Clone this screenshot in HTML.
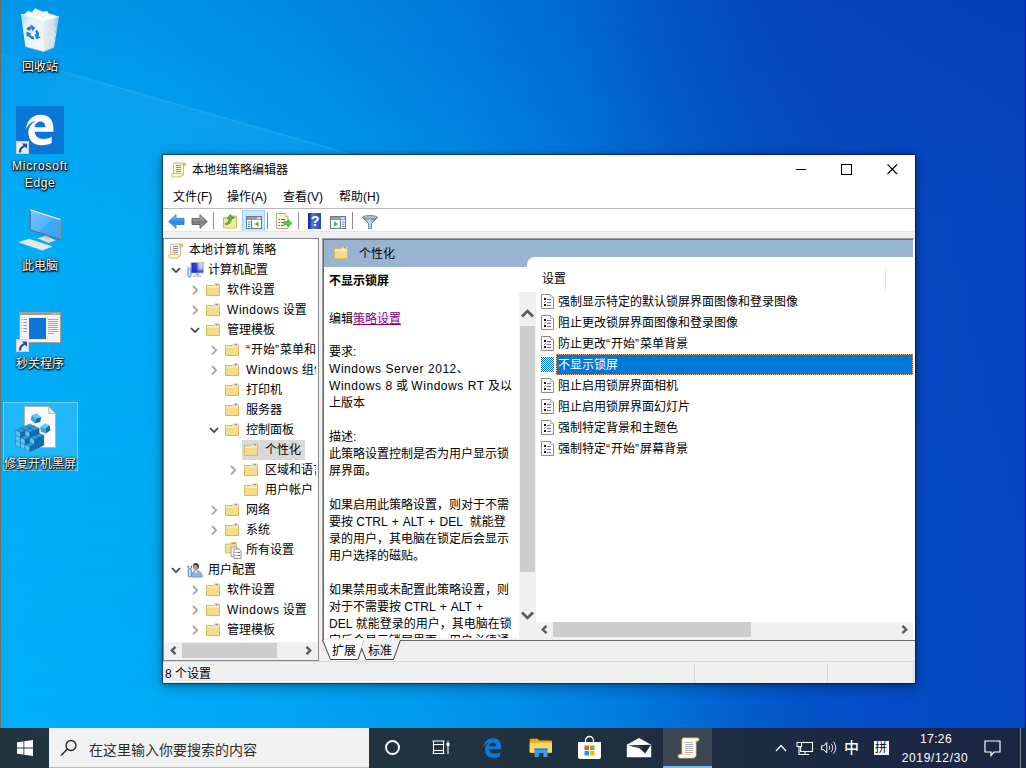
<!DOCTYPE html>
<html lang="zh-CN">
<head>
<meta charset="utf-8">
<title>本地组策略编辑器</title>
<style>
html,body{margin:0;padding:0;}
body{width:1026px;height:768px;overflow:hidden;position:relative;background:#0a6fd0;
 font-family:"Liberation Sans","Noto Sans CJK SC",sans-serif;font-size:12px;color:#000;}
.a{position:absolute;}
.t{position:absolute;white-space:nowrap;line-height:16px;height:16px;margin-top:1px;}
#desk{left:0;top:0;width:1026px;height:728px;overflow:hidden;
 background:linear-gradient(85deg,#00aef8 0%,#00a8f5 18%,#009aee 34%,#008ae6 47%,#0076dc 58%,#045ece 67%,#0551c8 74%,#054ac4 82%,#0446c1 100%);}
#desk .glow{left:0;top:0;width:1026px;height:728px;
 background:linear-gradient(180deg,rgba(0,30,150,.15) 0%,rgba(0,30,150,.09) 12%,rgba(0,40,150,0) 30%,rgba(0,120,255,.03) 100%);}
#desk .glow2{left:0;top:0;width:800px;height:728px;
 background:linear-gradient(90deg,rgba(0,205,255,.12) 0%,rgba(0,205,255,.12) 55%,rgba(0,205,255,0) 100%);
 -webkit-mask-image:linear-gradient(180deg,rgba(0,0,0,0) 0%,rgba(0,0,0,.35) 40%,#000 100%);}
.beam{position:absolute;left:0;top:52px;width:560px;height:160px;background:linear-gradient(180deg,rgba(130,220,255,.0) 0,rgba(130,220,255,.20) 1.5px,rgba(90,205,255,.12) 3px,rgba(60,200,255,.05) 60px,rgba(60,200,255,0) 160px);transform-origin:0 0;transform:rotate(16deg);-webkit-mask-image:linear-gradient(90deg,rgba(0,0,0,.4) 0,#000 20%,#000 60%,rgba(0,0,0,.3) 100%);}
.dl{position:absolute;color:#fff;text-align:center;width:90px;line-height:17px;font-size:12px;
 text-shadow:0 1px 2px rgba(0,0,0,.95),0 0 3px rgba(0,0,0,.85),1px 1px 1px rgba(0,0,0,.8),0 0 1px rgba(0,0,0,.6);}
/* window */
#win{left:162px;top:154px;width:754px;height:530px;background:#fff;background-clip:padding-box;overflow:hidden;box-sizing:border-box;border:1px solid rgba(0,10,40,.5);
 box-shadow:0 3px 12px rgba(0,0,0,.32),0 0 4px rgba(0,0,0,.2);}
#win .t,#win .a{}
.l{letter-spacing:.55px;}
.u{word-spacing:1.2px;}
.q{letter-spacing:1px;}
.sep{position:absolute;width:1px;background:#8d8d8d;top:58px;height:18px;}
.row{position:absolute;left:0;height:20px;width:155px;}
.chev{position:absolute;top:0;width:16px;height:20px;}
.li{position:absolute;left:233px;width:380px;height:21px;}
.li .t{left:0;top:2px;}
/* taskbar */
#tb{left:0;top:728px;width:1026px;height:40px;background:linear-gradient(90deg,#21343e 0%,#21333e 48%,#1e2d41 68%,#1b2843 82%,#1b2643 100%);}
#search{left:49px;top:0;width:320px;height:39px;background:#f2f2f2;border-bottom:1px solid #bdbdbd;}
</style>
</head>
<body>
<div id="desk" class="a">
 <div class="a glow2"></div>
 <div class="a glow"></div>
 <div class="beam"></div>
 <svg class="a" style="left:12px;top:2px" width="56" height="56" viewBox="0 0 56 56"><defs><linearGradient id="rbl" x1="0" y1="0" x2="1" y2="1"><stop offset="0" stop-color="#cfe6f6" stop-opacity=".75"/><stop offset=".25" stop-color="#f1f5f9" stop-opacity=".95"/><stop offset="1" stop-color="#f6f8fa"/></linearGradient><linearGradient id="rbr" x1="0" y1="0" x2="1" y2="0"><stop offset="0" stop-color="#e9edf1"/><stop offset=".6" stop-color="#dde4ea" stop-opacity=".95"/><stop offset="1" stop-color="#b9d9f0" stop-opacity=".7"/></linearGradient></defs><path d="M9 12.5L27 8l20 6.5-15.8 5z" fill="#d5e9f7" opacity=".8"/><path d="M12 13l4-4 4 1.5 3-4 4.5 2 2.5 2 5-1.5 2 3.5 5.5.5 1.5 2.5-13.8 4.5-10-4z" fill="#fbfcfd" stroke="#d3dbe2" stroke-width=".5"/><path d="M20 10.5l3 4 4-3.5 3 4.5 4-3" fill="none" stroke="#cfd6dd" stroke-width=".7"/><path d="M9 12.5l22.2 7 .3 30.1-18.2-5.1z" fill="url(#rbl)"/><path d="M31.2 19.5l15.8-5-4.8 30.8-10.7 4.3z" fill="url(#rbr)"/><path d="M9 12.5l22.2 7 15.8-5" fill="none" stroke="#e8f1f8" stroke-width="1"/><path d="M31.2 19.5l.3 30.1" stroke="#f7f9fb" stroke-width=".8"/><path d="M13.3 44.5l18.2 5.1 10.7-4.3" fill="none" stroke="#d9cfc8" stroke-width=".7"/><path d="M40 24l3 2.5-3 3 3 3-3.5 3 3 3-3.5 3" fill="none" stroke="#f6f8fa" stroke-width="1.2" opacity=".5"/><g transform="translate(20.7,30.9) skewY(17) scale(.95)"><g transform="rotate(0)"><path d="M-5.02 -1.35A5.2 5.2 0 0 1 -1.35 -5.02" fill="none" stroke="#1e78de" stroke-width="3"/><path d="M-2.3 -8.4L-.4 -1.6 2.9 -6.1z" fill="#1e78de"/></g><g transform="rotate(120)"><path d="M-5.02 -1.35A5.2 5.2 0 0 1 -1.35 -5.02" fill="none" stroke="#1e78de" stroke-width="3"/><path d="M-2.3 -8.4L-.4 -1.6 2.9 -6.1z" fill="#1e78de"/></g><g transform="rotate(240)"><path d="M-5.02 -1.35A5.2 5.2 0 0 1 -1.35 -5.02" fill="none" stroke="#1e78de" stroke-width="3"/><path d="M-2.3 -8.4L-.4 -1.6 2.9 -6.1z" fill="#1e78de"/></g></g></svg>
<div class="dl" style="left:-5px;top:59px">回收站</div>
<div class="a" style="left:16px;top:106px;width:48px;height:48px;background:#0a77d8"></div>
<svg class="a" style="left:23px;top:113px" width="34" height="34" viewBox="0 0 36 38"><path d="M2 19C3 9 9 2 19 2c9 0 14 6 14 15v4H12c.5 5 4 8 10 8 4 0 7-1 9-2.5v7c-3 1.5-6 2.5-11 2.5-9 0-15-5-15-14 0-6 3-10 8-13C7 10.5 4 14 2 19zm10-3h12c0-4-2-6.5-5.5-6.5S12.5 12 12 16z" fill="#fff"/></svg>
<div class="a" style="left:16px;top:141px;width:13px;height:13px;background:#ececec;box-shadow:inset 0 0 0 1px #d6cfc6"></div><svg class="a" style="left:17px;top:142px" width="11" height="11" viewBox="0 0 11 11"><path d="M4.8 1.5H10V6.7z" fill="#1d4fa5"/><path d="M7.8 3.8C4.5 5.2 2.8 7.5 3 10.5" fill="none" stroke="#1d4fa5" stroke-width="2.3"/></svg>
<div class="dl" style="left:-5px;top:158px;letter-spacing:.8px">Microsoft</div>
<div class="dl" style="left:-5px;top:175px;letter-spacing:.6px">Edge</div>
<svg class="a" style="left:14px;top:206px" width="52" height="48" viewBox="0 0 52 48"><defs><linearGradient id="pc" x1="0" y1="0" x2="1" y2="1"><stop offset="0" stop-color="#72c4ff"/><stop offset=".5" stop-color="#55b4fb"/><stop offset=".52" stop-color="#3ea9f9"/><stop offset="1" stop-color="#38a4f6"/></linearGradient></defs><path d="M23.2 32.3l8.3-2.3 10.2 4.3-7 2.6z" fill="#d9dee2"/><path d="M31 27l4 1.3v5l-4-1z" fill="#b9c0c6"/><path d="M16.2 3.8l30.3 9.9v20l-30.3-9.8z" fill="url(#pc)" stroke="#5b5f66" stroke-width="1"/><path d="M16.2 3.8l30.3 9.9" stroke="#eceff2" stroke-width="1.3"/><path d="M46.5 13.7v20" stroke="#8b9096" stroke-width="1.2"/><path d="M4.9 36.3l10.2-3.3 23 7.6-9.8 3.7z" fill="#f0f2f4" stroke="#d3d8dc" stroke-width=".5"/><path d="M8 35.5l23 7.5M11 34.5l23 7.5M13.5 33.6l23 7.6M9 37.6l9-3M14 39.3l9-3M19 40.9l9-3M24 42.5l9-3" stroke="#d5dadf" stroke-width=".5"/></svg>
<div class="dl" style="left:-5px;top:258px">此电脑</div>
<svg class="a" style="left:19px;top:312px" width="42" height="31" viewBox="0 0 42 31"><rect x=".5" y=".5" width="41" height="30" fill="#f3f3f3" stroke="#a3a09c"/><rect x=".5" y=".5" width="41" height="2.5" fill="#9b9b9b"/><path d="M33 1.7h1.5M35.5 1.7h1.5M38 1.7h1.5" stroke="#dcdcdc" stroke-width="1"/><rect x="10" y="6" width="17" height="21" fill="#0e74d8"/><path d="M2.5 7.5h1M4.5 7.5h3.5M2.5 10.5h1M4.5 10.5h3.5M2.5 13.5h1M4.5 13.5h3.5M2.5 16.5h1M4.5 16.5h3.5M2.5 19.5h1M4.5 19.5h3.5" stroke="#9a9a9a" stroke-width="1"/><path d="M29 7.5h10M29 9.5h10M29 11.5h10M29 13.5h10M29 15.5h10M29 17.5h10M29 19.5h10M29 21.5h6" stroke="#a8a8a8" stroke-width="1"/></svg>
<div class="a" style="left:16px;top:339px;width:13px;height:13px;background:#ececec;box-shadow:inset 0 0 0 1px #d6cfc6"></div><svg class="a" style="left:17px;top:340px" width="11" height="11" viewBox="0 0 11 11"><path d="M4.8 1.5H10V6.7z" fill="#1d4fa5"/><path d="M7.8 3.8C4.5 5.2 2.8 7.5 3 10.5" fill="none" stroke="#1d4fa5" stroke-width="2.3"/></svg>
<div class="dl" style="left:-5px;top:356px">秒关程序</div>
<div class="a" style="left:3px;top:402px;width:73px;height:67px;background:rgba(110,210,255,.30);border:1px solid rgba(170,225,255,.6)"></div>
<svg class="a" style="left:14px;top:404px" width="46" height="50" viewBox="0 0 46 50"><path d="M10.5 2.5h24l7 7v34h-31z" fill="#fafafa" stroke="#b5a8a0" stroke-width=".8"/><path d="M34.5 2.5v7h7z" fill="#e6e6e6" stroke="#b5a8a0" stroke-width=".7"/><g stroke="#1a5f92" stroke-width=".35" stroke-linejoin="round"><polygon points="15.8,30 20.5,32.1 15.8,34.2 11.1,32.1" fill="#2b9cde"/><polygon points="11.1,32.1 15.8,34.2 15.8,39.2 11.1,37.1" fill="#58c8f9"/><polygon points="20.5,32.1 15.8,34.2 15.8,39.2 20.5,37.1" fill="#0f6dac"/><polygon points="11.1,32.1 15.8,34.2 11.1,36.3 6.4,34.2" fill="#2b9cde"/><polygon points="6.4,34.2 11.1,36.3 11.1,41.3 6.4,39.2" fill="#58c8f9"/><polygon points="15.8,34.2 11.1,36.3 11.1,41.3 15.8,39.2" fill="#0f6dac"/><polygon points="20.5,32.1 25.2,34.2 20.5,36.3 15.8,34.2" fill="#2b9cde"/><polygon points="15.8,34.2 20.5,36.3 20.5,41.3 15.8,39.2" fill="#58c8f9"/><polygon points="25.2,34.2 20.5,36.3 20.5,41.3 25.2,39.2" fill="#0f6dac"/><polygon points="15.8,25 20.5,27.1 15.8,29.2 11.1,27.1" fill="#2b9cde"/><polygon points="11.1,27.1 15.8,29.2 15.8,34.2 11.1,32.1" fill="#58c8f9"/><polygon points="20.5,27.1 15.8,29.2 15.8,34.2 20.5,32.1" fill="#0f6dac"/><polygon points="6.4,34.2 11.1,36.3 6.4,38.4 1.7,36.3" fill="#2b9cde"/><polygon points="1.7,36.3 6.4,38.4 6.4,43.4 1.7,41.3" fill="#58c8f9"/><polygon points="11.1,36.3 6.4,38.4 6.4,43.4 11.1,41.3" fill="#0f6dac"/><polygon points="15.8,34.2 20.5,36.3 15.8,38.4 11.1,36.3" fill="#2b9cde"/><polygon points="11.1,36.3 15.8,38.4 15.8,43.4 11.1,41.3" fill="#58c8f9"/><polygon points="20.5,36.3 15.8,38.4 15.8,43.4 20.5,41.3" fill="#0f6dac"/><polygon points="25.2,34.2 29.9,36.3 25.2,38.4 20.5,36.3" fill="#2b9cde"/><polygon points="20.5,36.3 25.2,38.4 25.2,43.4 20.5,41.3" fill="#58c8f9"/><polygon points="29.9,36.3 25.2,38.4 25.2,43.4 29.9,41.3" fill="#0f6dac"/><polygon points="11.1,27.1 15.8,29.2 11.1,31.3 6.4,29.2" fill="#2b9cde"/><polygon points="6.4,29.2 11.1,31.3 11.1,36.3 6.4,34.2" fill="#58c8f9"/><polygon points="15.8,29.2 11.1,31.3 11.1,36.3 15.8,34.2" fill="#0f6dac"/><polygon points="20.5,27.1 25.2,29.2 20.5,31.3 15.8,29.2" fill="#2b9cde"/><polygon points="15.8,29.2 20.5,31.3 20.5,36.3 15.8,34.2" fill="#58c8f9"/><polygon points="25.2,29.2 20.5,31.3 20.5,36.3 25.2,34.2" fill="#0f6dac"/><polygon points="15.8,20 20.5,22.1 15.8,24.2 11.1,22.1" fill="#2b9cde"/><polygon points="11.1,22.1 15.8,24.2 15.8,29.2 11.1,27.1" fill="#58c8f9"/><polygon points="20.5,22.1 15.8,24.2 15.8,29.2 20.5,27.1" fill="#0f6dac"/><polygon points="11.1,36.3 15.8,38.4 11.1,40.5 6.4,38.4" fill="#2b9cde"/><polygon points="6.4,38.4 11.1,40.5 11.1,45.5 6.4,43.4" fill="#58c8f9"/><polygon points="15.8,38.4 11.1,40.5 11.1,45.5 15.8,43.4" fill="#0f6dac"/><polygon points="20.5,36.3 25.2,38.4 20.5,40.5 15.8,38.4" fill="#2b9cde"/><polygon points="15.8,38.4 20.5,40.5 20.5,45.5 15.8,43.4" fill="#58c8f9"/><polygon points="25.2,38.4 20.5,40.5 20.5,45.5 25.2,43.4" fill="#0f6dac"/><polygon points="6.4,29.2 11.1,31.3 6.4,33.4 1.7,31.3" fill="#2b9cde"/><polygon points="1.7,31.3 6.4,33.4 6.4,38.4 1.7,36.3" fill="#58c8f9"/><polygon points="11.1,31.3 6.4,33.4 6.4,38.4 11.1,36.3" fill="#0f6dac"/><polygon points="15.8,29.2 20.5,31.3 15.8,33.4 11.1,31.3" fill="#2b9cde"/><polygon points="11.1,31.3 15.8,33.4 15.8,38.4 11.1,36.3" fill="#58c8f9"/><polygon points="20.5,31.3 15.8,33.4 15.8,38.4 20.5,36.3" fill="#0f6dac"/><polygon points="25.2,29.2 29.9,31.3 25.2,33.4 20.5,31.3" fill="#2b9cde"/><polygon points="20.5,31.3 25.2,33.4 25.2,38.4 20.5,36.3" fill="#58c8f9"/><polygon points="29.9,31.3 25.2,33.4 25.2,38.4 29.9,36.3" fill="#0f6dac"/><polygon points="11.1,22.1 15.8,24.2 11.1,26.3 6.4,24.2" fill="#2b9cde"/><polygon points="6.4,24.2 11.1,26.3 11.1,31.3 6.4,29.2" fill="#58c8f9"/><polygon points="15.8,24.2 11.1,26.3 11.1,31.3 15.8,29.2" fill="#0f6dac"/><polygon points="20.5,22.1 25.2,24.2 20.5,26.3 15.8,24.2" fill="#2b9cde"/><polygon points="15.8,24.2 20.5,26.3 20.5,31.3 15.8,29.2" fill="#58c8f9"/><polygon points="25.2,24.2 20.5,26.3 20.5,31.3 25.2,29.2" fill="#0f6dac"/><polygon points="15.8,38.4 20.5,40.5 15.8,42.6 11.1,40.5" fill="#2b9cde"/><polygon points="11.1,40.5 15.8,42.6 15.8,47.6 11.1,45.5" fill="#58c8f9"/><polygon points="20.5,40.5 15.8,42.6 15.8,47.6 20.5,45.5" fill="#0f6dac"/><polygon points="11.1,31.3 15.8,33.4 11.1,35.5 6.4,33.4" fill="#2b9cde"/><polygon points="6.4,33.4 11.1,35.5 11.1,40.5 6.4,38.4" fill="#58c8f9"/><polygon points="15.8,33.4 11.1,35.5 11.1,40.5 15.8,38.4" fill="#0f6dac"/><polygon points="20.5,31.3 25.2,33.4 20.5,35.5 15.8,33.4" fill="#2b9cde"/><polygon points="15.8,33.4 20.5,35.5 20.5,40.5 15.8,38.4" fill="#58c8f9"/><polygon points="25.2,33.4 20.5,35.5 20.5,40.5 25.2,38.4" fill="#0f6dac"/><polygon points="6.4,24.2 11.1,26.3 6.4,28.4 1.7,26.3" fill="#2b9cde"/><polygon points="1.7,26.3 6.4,28.4 6.4,33.4 1.7,31.3" fill="#58c8f9"/><polygon points="11.1,26.3 6.4,28.4 6.4,33.4 11.1,31.3" fill="#0f6dac"/><polygon points="15.8,24.2 20.5,26.3 15.8,28.4 11.1,26.3" fill="#2b9cde"/><polygon points="11.1,26.3 15.8,28.4 15.8,33.4 11.1,31.3" fill="#58c8f9"/><polygon points="20.5,26.3 15.8,28.4 15.8,33.4 20.5,31.3" fill="#0f6dac"/></g><g transform="translate(22,14.5) rotate(12)"><polygon points="0,-5 4.8,-2.5 0,0 -4.8,-2.5" fill="#5ccbfb"/><polygon points="-4.8,-2.5 0,0 0,5 -4.8,2.5" fill="#36a8e8"/><polygon points="4.8,-2.5 0,0 0,5 4.8,2.5" fill="#0f6dac"/></g><g transform="translate(31.3,24.5) rotate(-8)"><polygon points="0,-5 4.8,-2.5 0,0 -4.8,-2.5" fill="#5ccbfb"/><polygon points="-4.8,-2.5 0,0 0,5 -4.8,2.5" fill="#36a8e8"/><polygon points="4.8,-2.5 0,0 0,5 4.8,2.5" fill="#0f6dac"/></g></svg>
<div class="dl" style="left:-5px;top:456px">修复开机黑屏</div>
</div>
<div class="a" style="left:0;top:0;width:1px;height:768px;background:#6a6e70"></div>
<div class="a" style="left:1025px;top:0;width:1px;height:768px;background:#1b2640"></div>

<div id="win" class="a">
 <svg class="a" style="left:8px;top:7px" width="16" height="16" viewBox="0 0 16 16"><rect x="2.5" y="1" width="10" height="12.5" rx="1" fill="#fdf6d4" stroke="#b5b1a2" stroke-width=".9"/><circle cx="13.3" cy="2.3" r="1.5" fill="#e6cd7c" stroke="#bfa458" stroke-width=".7"/><rect x=".5" y="11.5" width="10.5" height="3.5" rx="1.6" fill="#fff6d0" stroke="#c9b46e" stroke-width=".9"/><path d="M5 3.5h5M5 5.5h5M5 7.5h5M5 9.5h5" stroke="#8d88b2" stroke-width="1"/></svg>
<div class="t" style="left:29px;top:6px;">本地组策略编辑器</div>
<div class="a" style="left:633px;top:14px;width:10px;height:1px;background:#000"></div>
<div class="a" style="left:678px;top:9px;width:9px;height:9px;border:1px solid #000"></div>
<svg class="a" style="left:724px;top:9px" width="11" height="11" viewBox="0 0 11 11"><path d="M.5.5l9.5 9.5M10 .500l-9.5 9.5" stroke="#000" stroke-width="1.1"/></svg>
<div class="t" style="left:10px;top:33px;">文件(F)</div>
<div class="t" style="left:64px;top:33px;">操作(A)</div>
<div class="t" style="left:120px;top:33px;">查看(V)</div>
<div class="t" style="left:176px;top:33px;">帮助(H)</div>
<div class="a" style="left:0;top:53px;width:752px;height:1px;background:#b9b9b9"></div>
<div class="a" style="left:0;top:76px;width:752px;height:452px;background:#f0f0f0"></div>
<div class="a" style="left:0;top:54px;width:752px;height:22px;background:#fff"></div>
<div class="a" style="left:50px;top:57px;width:1px;height:17px;background:#8d8d8d"></div>
<div class="a" style="left:104px;top:57px;width:1px;height:17px;background:#8d8d8d"></div>
<div class="a" style="left:135px;top:57px;width:1px;height:17px;background:#8d8d8d"></div>
<div class="a" style="left:189px;top:57px;width:1px;height:17px;background:#8d8d8d"></div>
<svg class="a" style="left:5px;top:59px" width="17" height="15" viewBox="0 0 17 15"><defs><linearGradient id="gb" x1="0" y1="0" x2="0" y2="1"><stop offset="0" stop-color="#9bd6ff"/><stop offset=".45" stop-color="#2f93ee"/><stop offset=".55" stop-color="#1d84e4"/><stop offset="1" stop-color="#5fb9f8"/></linearGradient></defs><path d="M.7 7.5l7.3-6.8v3.8h8v6h-8v3.8z" fill="url(#gb)" stroke="#2f7fd0" stroke-width=".9" stroke-linejoin="round"/></svg>
<svg class="a" style="left:28px;top:59px" width="17" height="15" viewBox="0 0 17 15"><defs><linearGradient id="gf" x1="0" y1="0" x2="0" y2="1"><stop offset="0" stop-color="#cfcfcf"/><stop offset=".45" stop-color="#8a8a8a"/><stop offset=".55" stop-color="#7a7a7a"/><stop offset="1" stop-color="#b0b0b0"/></linearGradient></defs><path d="M16.3 7.5l-7.3-6.8v3.8h-8v6h8v3.8z" fill="url(#gf)" stroke="#5c5c5c" stroke-width=".9" stroke-linejoin="round"/></svg>
<svg class="a" style="left:59px;top:58px" width="16" height="16" viewBox="0 0 16 16"><path d="M1.5 4.5h5.5l1-1.5h6.5v12h-13z" fill="#f7dc8a" stroke="#d3b055" stroke-width=".9"/><path d="M2 6.5h12v8h-12z" fill="#f9e49f"/><rect x="10" y="3.5" width="3" height="1.5" fill="#5b95d9"/><path d="M3.5 10.5c2.5-.3 3.5-2 3.5-5h-1.8l3-4 3 4h-1.8c0 4-2.4 6.3-6 6z" fill="#52c63c" stroke="#2c8a20" stroke-width=".7" stroke-linejoin="round"/></svg>
<div class="a" style="left:79px;top:55px;width:21px;height:20px;background:#cce8ff;border:1px solid #99d1ff"></div>
<svg class="a" style="left:83px;top:61px" width="16" height="13" viewBox="0 0 16 13"><rect x=".5" y=".5" width="15" height="12" fill="#fff" stroke="#6f7a8c"/><rect x="1" y="1" width="14" height="3" fill="#8f9bb0"/><rect x="11" y="1.5" width="1.5" height="1.5" fill="#fff"/><rect x="13" y="1.5" width="1.5" height="1.5" fill="#fff"/><path d="M5.5 4v8.5" stroke="#6f7a8c"/><path d="M2 6h2.5M2 8.2h2.5M2 10.4h2.5" stroke="#2f74d8" stroke-width=".9"/><path d="M12.5 5.3v5.4l-4-2.7z" fill="#3fb83f"/></svg>
<svg class="a" style="left:113px;top:58px" width="17" height="16" viewBox="0 0 17 16"><path d="M.5.5h8.5l3 3v12h-11.5z" fill="#fcf6d6" stroke="#a8a18c" stroke-width=".9"/><path d="M9 .5v3h3" fill="#fff" stroke="#a8a18c" stroke-width=".7"/><path d="M2.5 6.5h1.5M5 6.5h4M2.5 9.5h1.5M5 9.5h3M2.5 12.5h1.5M5 12.5h3" stroke="#5d5f8a" stroke-width="1"/><path d="M8 8.8h4v-2l4 3.5-4 3.5v-2h-4z" fill="#5ed04a" stroke="#2f8f22" stroke-width=".7" stroke-linejoin="round"/></svg>
<svg class="a" style="left:145px;top:58px" width="13" height="16" viewBox="0 0 13 16"><defs><linearGradient id="gh" x1="0" y1="0" x2="1" y2="0"><stop offset="0" stop-color="#142c8c"/><stop offset=".18" stop-color="#1d3fb4"/><stop offset=".3" stop-color="#4f78e6"/><stop offset="1" stop-color="#1f48c2"/></linearGradient></defs><rect width="13" height="16" fill="url(#gh)"/><text x="7.3" y="13.3" font-family="Liberation Sans,sans-serif" font-weight="bold" font-size="14.5" fill="#fff" text-anchor="middle">?</text></svg>
<svg class="a" style="left:167px;top:61px" width="16" height="13" viewBox="0 0 16 13"><rect x=".5" y=".5" width="15" height="12" fill="#fff" stroke="#6f7a8c"/><rect x="1" y="1" width="14" height="3" fill="#8f9bb0"/><rect x="11" y="1.5" width="1.5" height="1.5" fill="#fff"/><rect x="13" y="1.5" width="1.5" height="1.5" fill="#fff"/><path d="M10.5 4v8.5" stroke="#6f7a8c"/><path d="M12 6h2.5M12 8.2h2.5M12 10.4h2.5" stroke="#2f74d8" stroke-width=".9"/><path d="M4 5.3v5.4l4-2.7z" fill="#3fb83f"/></svg>
<svg class="a" style="left:199px;top:60px" width="16" height="14" viewBox="0 0 16 14"><defs><linearGradient id="gfl" x1="0" y1="0" x2="1" y2="0"><stop offset="0" stop-color="#5d82a6"/><stop offset=".45" stop-color="#cfdde9"/><stop offset="1" stop-color="#4f7699"/></linearGradient></defs><path d="M.5 2.5l6 6v5h3v-5l6-6z" fill="url(#gfl)" stroke="#4d7294" stroke-width=".8"/><ellipse cx="8" cy="2.3" rx="7.5" ry="1.8" fill="#a3bcd3" stroke="#55799c" stroke-width=".8"/></svg>
<div class="a" style="left:0;top:76px;width:752px;height:1px;background:#e4e4e4"></div>
<div class="a" id="tree" style="left:0px;top:83px;width:154px;height:421px;background:#fff;border:1px solid #828790;overflow:hidden"><svg class="a" style="left:4px;top:4px" width="16" height="16" viewBox="0 0 16 16"><rect x="2.5" y="1" width="10" height="12.5" rx="1" fill="#fdf6d4" stroke="#b5b1a2" stroke-width=".9"/><circle cx="13.3" cy="2.3" r="1.5" fill="#e6cd7c" stroke="#bfa458" stroke-width=".7"/><rect x=".5" y="11.5" width="10.5" height="3.5" rx="1.6" fill="#fff6d0" stroke="#c9b46e" stroke-width=".9"/><path d="M5 3.5h5M5 5.5h5M5 7.5h5M5 9.5h5" stroke="#8d88b2" stroke-width="1"/></svg>
<div class="t" style="left:25px;top:2px">本地计算机 策略</div>
<svg class="a" style="left:7px;top:28px" width="10" height="7" viewBox="0 0 10 7"><path d="M1 1l4 4 4-4" fill="none" stroke="#3c3c3c" stroke-width="1.7"/></svg>
<svg class="a" style="left:23px;top:23px" width="17" height="16" viewBox="0 0 17 16"><defs><linearGradient id="cg" x1="0" y1="0" x2="1" y2="0"><stop offset="0" stop-color="#1426c8"/><stop offset=".45" stop-color="#2a46e0"/><stop offset=".62" stop-color="#a8bdfb"/><stop offset=".8" stop-color="#d9e4ff"/><stop offset="1" stop-color="#8fa6ee"/></linearGradient><linearGradient id="cg2" x1="0" y1="0" x2="0" y2="1"><stop offset="0" stop-color="#fff" stop-opacity="0"/><stop offset=".55" stop-color="#1a2fd0" stop-opacity=".1"/><stop offset="1" stop-color="#1a2fd0" stop-opacity=".95"/></linearGradient></defs><rect x="4" y=".5" width="12.5" height="10.5" fill="url(#cg)" stroke="#bcc1c8" stroke-width="1"/><rect x="4.5" y="1" width="11.5" height="9.5" fill="url(#cg2)"/><rect x="9" y="11.5" width="3" height="2" fill="#aab0b9"/><rect x="6" y="13.5" width="8.5" height="1.5" fill="#c3c8cf"/><rect x="1" y="6.5" width="3" height="8.5" rx="1.3" fill="#d3e2f8" stroke="#4b7cd0" stroke-width=".9"/><path d="M1 6l-.3-1.8M4 6l.3-1.8" stroke="#8b93a6" stroke-width=".9"/></svg>
<div class="t" style="left:44px;top:22px">计算机配置</div>
<svg class="a" style="left:28px;top:46px" width="7" height="11" viewBox="0 0 7 11"><path d="M1 1l4.2 4.2-4.2 4.2" fill="none" stroke="#a6a6a6" stroke-width="1.8"/></svg>
<svg class="a" style="left:41px;top:43px" width="16" height="16" viewBox="0 0 16 16"><path d="M1.5 3.5h7l1-1.5h4.5v2H14.5v9.5h-13z" fill="#f7df8e" stroke="#d9b95a" stroke-width="1"/><path d="M9.2 2.5h4.3v1.5h-5.3z" fill="#fbf3cf"/><rect x="10.5" y="2" width="2.5" height="1.5" fill="#6da3dc"/><path d="M2 5h12v8h-12z" fill="#f6dc8a"/><path d="M2 5h12" stroke="#fdf3c8" stroke-width="1"/></svg>
<div class="t" style="left:63px;top:42px">软件设置</div>
<svg class="a" style="left:28px;top:66px" width="7" height="11" viewBox="0 0 7 11"><path d="M1 1l4.2 4.2-4.2 4.2" fill="none" stroke="#a6a6a6" stroke-width="1.8"/></svg>
<svg class="a" style="left:41px;top:63px" width="16" height="16" viewBox="0 0 16 16"><path d="M1.5 3.5h7l1-1.5h4.5v2H14.5v9.5h-13z" fill="#f7df8e" stroke="#d9b95a" stroke-width="1"/><path d="M9.2 2.5h4.3v1.5h-5.3z" fill="#fbf3cf"/><rect x="10.5" y="2" width="2.5" height="1.5" fill="#6da3dc"/><path d="M2 5h12v8h-12z" fill="#f6dc8a"/><path d="M2 5h12" stroke="#fdf3c8" stroke-width="1"/></svg>
<div class="t" style="left:63px;top:62px"><span class="l">Windows</span> 设置</div>
<svg class="a" style="left:26px;top:88px" width="10" height="7" viewBox="0 0 10 7"><path d="M1 1l4 4 4-4" fill="none" stroke="#3c3c3c" stroke-width="1.7"/></svg>
<svg class="a" style="left:41px;top:83px" width="16" height="16" viewBox="0 0 16 16"><path d="M1.5 3.5h7l1-1.5h4.5v2H14.5v9.5h-13z" fill="#f7df8e" stroke="#d9b95a" stroke-width="1"/><path d="M9.2 2.5h4.3v1.5h-5.3z" fill="#fbf3cf"/><rect x="10.5" y="2" width="2.5" height="1.5" fill="#6da3dc"/><path d="M2 5h12v8h-12z" fill="#f6dc8a"/><path d="M2 5h12" stroke="#fdf3c8" stroke-width="1"/></svg>
<div class="t" style="left:63px;top:82px">管理模板</div>
<svg class="a" style="left:47px;top:106px" width="7" height="11" viewBox="0 0 7 11"><path d="M1 1l4.2 4.2-4.2 4.2" fill="none" stroke="#a6a6a6" stroke-width="1.8"/></svg>
<svg class="a" style="left:60px;top:103px" width="16" height="16" viewBox="0 0 16 16"><path d="M1.5 3.5h7l1-1.5h4.5v2H14.5v9.5h-13z" fill="#f7df8e" stroke="#d9b95a" stroke-width="1"/><path d="M9.2 2.5h4.3v1.5h-5.3z" fill="#fbf3cf"/><rect x="10.5" y="2" width="2.5" height="1.5" fill="#6da3dc"/><path d="M2 5h12v8h-12z" fill="#f6dc8a"/><path d="M2 5h12" stroke="#fdf3c8" stroke-width="1"/></svg>
<div class="t" style="left:82px;top:102px"><span class="q">“</span>开始<span class="q">”</span>菜单和任务栏</div>
<svg class="a" style="left:47px;top:126px" width="7" height="11" viewBox="0 0 7 11"><path d="M1 1l4.2 4.2-4.2 4.2" fill="none" stroke="#a6a6a6" stroke-width="1.8"/></svg>
<svg class="a" style="left:60px;top:123px" width="16" height="16" viewBox="0 0 16 16"><path d="M1.5 3.5h7l1-1.5h4.5v2H14.5v9.5h-13z" fill="#f7df8e" stroke="#d9b95a" stroke-width="1"/><path d="M9.2 2.5h4.3v1.5h-5.3z" fill="#fbf3cf"/><rect x="10.5" y="2" width="2.5" height="1.5" fill="#6da3dc"/><path d="M2 5h12v8h-12z" fill="#f6dc8a"/><path d="M2 5h12" stroke="#fdf3c8" stroke-width="1"/></svg>
<div class="t" style="left:82px;top:122px"><span class="l">Windows</span> 组件</div>
<svg class="a" style="left:60px;top:143px" width="16" height="16" viewBox="0 0 16 16"><path d="M1.5 3.5h7l1-1.5h4.5v2H14.5v9.5h-13z" fill="#f7df8e" stroke="#d9b95a" stroke-width="1"/><path d="M9.2 2.5h4.3v1.5h-5.3z" fill="#fbf3cf"/><rect x="10.5" y="2" width="2.5" height="1.5" fill="#6da3dc"/><path d="M2 5h12v8h-12z" fill="#f6dc8a"/><path d="M2 5h12" stroke="#fdf3c8" stroke-width="1"/></svg>
<div class="t" style="left:82px;top:142px">打印机</div>
<svg class="a" style="left:60px;top:163px" width="16" height="16" viewBox="0 0 16 16"><path d="M1.5 3.5h7l1-1.5h4.5v2H14.5v9.5h-13z" fill="#f7df8e" stroke="#d9b95a" stroke-width="1"/><path d="M9.2 2.5h4.3v1.5h-5.3z" fill="#fbf3cf"/><rect x="10.5" y="2" width="2.5" height="1.5" fill="#6da3dc"/><path d="M2 5h12v8h-12z" fill="#f6dc8a"/><path d="M2 5h12" stroke="#fdf3c8" stroke-width="1"/></svg>
<div class="t" style="left:82px;top:162px">服务器</div>
<svg class="a" style="left:45px;top:188px" width="10" height="7" viewBox="0 0 10 7"><path d="M1 1l4 4 4-4" fill="none" stroke="#3c3c3c" stroke-width="1.7"/></svg>
<svg class="a" style="left:60px;top:183px" width="16" height="16" viewBox="0 0 16 16"><path d="M1.5 3.5h7l1-1.5h4.5v2H14.5v9.5h-13z" fill="#f7df8e" stroke="#d9b95a" stroke-width="1"/><path d="M9.2 2.5h4.3v1.5h-5.3z" fill="#fbf3cf"/><rect x="10.5" y="2" width="2.5" height="1.5" fill="#6da3dc"/><path d="M2 5h12v8h-12z" fill="#f6dc8a"/><path d="M2 5h12" stroke="#fdf3c8" stroke-width="1"/></svg>
<div class="t" style="left:82px;top:182px">控制面板</div>
<div class="a" style="left:78px;top:201px;width:63px;height:20px;background:#d9d9d9"></div>
<svg class="a" style="left:79px;top:203px" width="16" height="16" viewBox="0 0 16 16"><path d="M1.5 3.5h7l1-1.5h4.5v2H14.5v9.5h-13z" fill="#f7df8e" stroke="#d9b95a" stroke-width="1"/><path d="M9.2 2.5h4.3v1.5h-5.3z" fill="#fbf3cf"/><rect x="10.5" y="2" width="2.5" height="1.5" fill="#6da3dc"/><path d="M2 5h12v8h-12z" fill="#f6dc8a"/><path d="M2 5h12" stroke="#fdf3c8" stroke-width="1"/></svg>
<div class="t" style="left:101px;top:202px">个性化</div>
<svg class="a" style="left:66px;top:226px" width="7" height="11" viewBox="0 0 7 11"><path d="M1 1l4.2 4.2-4.2 4.2" fill="none" stroke="#a6a6a6" stroke-width="1.8"/></svg>
<svg class="a" style="left:79px;top:223px" width="16" height="16" viewBox="0 0 16 16"><path d="M1.5 3.5h7l1-1.5h4.5v2H14.5v9.5h-13z" fill="#f7df8e" stroke="#d9b95a" stroke-width="1"/><path d="M9.2 2.5h4.3v1.5h-5.3z" fill="#fbf3cf"/><rect x="10.5" y="2" width="2.5" height="1.5" fill="#6da3dc"/><path d="M2 5h12v8h-12z" fill="#f6dc8a"/><path d="M2 5h12" stroke="#fdf3c8" stroke-width="1"/></svg>
<div class="t" style="left:101px;top:222px">区域和语言选项</div>
<svg class="a" style="left:79px;top:243px" width="16" height="16" viewBox="0 0 16 16"><path d="M1.5 3.5h7l1-1.5h4.5v2H14.5v9.5h-13z" fill="#f7df8e" stroke="#d9b95a" stroke-width="1"/><path d="M9.2 2.5h4.3v1.5h-5.3z" fill="#fbf3cf"/><rect x="10.5" y="2" width="2.5" height="1.5" fill="#6da3dc"/><path d="M2 5h12v8h-12z" fill="#f6dc8a"/><path d="M2 5h12" stroke="#fdf3c8" stroke-width="1"/></svg>
<div class="t" style="left:101px;top:242px">用户帐户</div>
<svg class="a" style="left:47px;top:266px" width="7" height="11" viewBox="0 0 7 11"><path d="M1 1l4.2 4.2-4.2 4.2" fill="none" stroke="#a6a6a6" stroke-width="1.8"/></svg>
<svg class="a" style="left:60px;top:263px" width="16" height="16" viewBox="0 0 16 16"><path d="M1.5 3.5h7l1-1.5h4.5v2H14.5v9.5h-13z" fill="#f7df8e" stroke="#d9b95a" stroke-width="1"/><path d="M9.2 2.5h4.3v1.5h-5.3z" fill="#fbf3cf"/><rect x="10.5" y="2" width="2.5" height="1.5" fill="#6da3dc"/><path d="M2 5h12v8h-12z" fill="#f6dc8a"/><path d="M2 5h12" stroke="#fdf3c8" stroke-width="1"/></svg>
<div class="t" style="left:82px;top:262px">网络</div>
<svg class="a" style="left:47px;top:286px" width="7" height="11" viewBox="0 0 7 11"><path d="M1 1l4.2 4.2-4.2 4.2" fill="none" stroke="#a6a6a6" stroke-width="1.8"/></svg>
<svg class="a" style="left:60px;top:283px" width="16" height="16" viewBox="0 0 16 16"><path d="M1.5 3.5h7l1-1.5h4.5v2H14.5v9.5h-13z" fill="#f7df8e" stroke="#d9b95a" stroke-width="1"/><path d="M9.2 2.5h4.3v1.5h-5.3z" fill="#fbf3cf"/><rect x="10.5" y="2" width="2.5" height="1.5" fill="#6da3dc"/><path d="M2 5h12v8h-12z" fill="#f6dc8a"/><path d="M2 5h12" stroke="#fdf3c8" stroke-width="1"/></svg>
<div class="t" style="left:82px;top:282px">系统</div>
<svg class="a" style="left:61px;top:303px" width="18" height="17" viewBox="0 0 18 17"><path d="M.5 2h5l1-1.5h5v10.5h-11z" fill="#f7df8e" stroke="#d9b95a" stroke-width=".9"/><rect x="8.5" y="3" width="2.5" height="1.2" fill="#5b95d9" transform="translate(-1 -2)"/><path d="M6 5h5l2 2v7.5h-7z" fill="#f4f4f4" stroke="#9a9a9a" stroke-width=".9"/><path d="M9 7h5l2 2v7.5h-7z" fill="#fff" stroke="#8a8a8a" stroke-width=".9"/><path d="M10.5 10.5h1M12.5 10.5h2.5M10.5 13.5h1M12.5 13.5h2.5" stroke="#5d5f8a" stroke-width="1"/></svg>
<div class="t" style="left:82px;top:302px">所有设置</div>
<svg class="a" style="left:7px;top:328px" width="10" height="7" viewBox="0 0 10 7"><path d="M1 1l4 4 4-4" fill="none" stroke="#3c3c3c" stroke-width="1.7"/></svg>
<svg class="a" style="left:23px;top:323px" width="17" height="16" viewBox="0 0 17 16"><path d="M4.7 15c0-4.3 1.8-6.3 4.5-6.3 3.4 0 6 2 6 6.3z" fill="#8fb6e3" stroke="#5a88c6" stroke-width=".8"/><path d="M7.5 9l1.5 2.5 1.3-2.6z" fill="#eef3fa"/><ellipse cx="8.9" cy="4.3" rx="3" ry="3.4" fill="#3a3a3a"/><ellipse cx="8.4" cy="5.6" rx="2.2" ry="2.7" fill="#c99b6b"/><rect x="1.3" y="6.5" width="2.9" height="8.5" rx="1.3" fill="#dbe8fa" stroke="#2f66cc" stroke-width=".9"/><path d="M1.3 6.3l-.5-2.3 1.3 1M4.2 6.3l.5-2.3-1.3 1" stroke="#4a5a7a" stroke-width=".9" fill="none"/></svg>
<div class="t" style="left:44px;top:322px">用户配置</div>
<svg class="a" style="left:28px;top:346px" width="7" height="11" viewBox="0 0 7 11"><path d="M1 1l4.2 4.2-4.2 4.2" fill="none" stroke="#a6a6a6" stroke-width="1.8"/></svg>
<svg class="a" style="left:41px;top:343px" width="16" height="16" viewBox="0 0 16 16"><path d="M1.5 3.5h7l1-1.5h4.5v2H14.5v9.5h-13z" fill="#f7df8e" stroke="#d9b95a" stroke-width="1"/><path d="M9.2 2.5h4.3v1.5h-5.3z" fill="#fbf3cf"/><rect x="10.5" y="2" width="2.5" height="1.5" fill="#6da3dc"/><path d="M2 5h12v8h-12z" fill="#f6dc8a"/><path d="M2 5h12" stroke="#fdf3c8" stroke-width="1"/></svg>
<div class="t" style="left:63px;top:342px">软件设置</div>
<svg class="a" style="left:28px;top:366px" width="7" height="11" viewBox="0 0 7 11"><path d="M1 1l4.2 4.2-4.2 4.2" fill="none" stroke="#a6a6a6" stroke-width="1.8"/></svg>
<svg class="a" style="left:41px;top:363px" width="16" height="16" viewBox="0 0 16 16"><path d="M1.5 3.5h7l1-1.5h4.5v2H14.5v9.5h-13z" fill="#f7df8e" stroke="#d9b95a" stroke-width="1"/><path d="M9.2 2.5h4.3v1.5h-5.3z" fill="#fbf3cf"/><rect x="10.5" y="2" width="2.5" height="1.5" fill="#6da3dc"/><path d="M2 5h12v8h-12z" fill="#f6dc8a"/><path d="M2 5h12" stroke="#fdf3c8" stroke-width="1"/></svg>
<div class="t" style="left:63px;top:362px"><span class="l">Windows</span> 设置</div>
<svg class="a" style="left:28px;top:386px" width="7" height="11" viewBox="0 0 7 11"><path d="M1 1l4.2 4.2-4.2 4.2" fill="none" stroke="#a6a6a6" stroke-width="1.8"/></svg>
<svg class="a" style="left:41px;top:383px" width="16" height="16" viewBox="0 0 16 16"><path d="M1.5 3.5h7l1-1.5h4.5v2H14.5v9.5h-13z" fill="#f7df8e" stroke="#d9b95a" stroke-width="1"/><path d="M9.2 2.5h4.3v1.5h-5.3z" fill="#fbf3cf"/><rect x="10.5" y="2" width="2.5" height="1.5" fill="#6da3dc"/><path d="M2 5h12v8h-12z" fill="#f6dc8a"/><path d="M2 5h12" stroke="#fdf3c8" stroke-width="1"/></svg>
<div class="t" style="left:63px;top:382px">管理模板</div>
<div class="a" style="left:152px;top:0;width:3px;height:403px;background:#fff"></div>
<div class="a" style="left:0;top:403px;width:155px;height:18px;background:#f0f0f0"></div>
<div class="a" style="left:18px;top:404px;width:95px;height:15px;background:#cdcdcd"></div>
<svg class="a" style="left:6px;top:407px" width="7" height="9" viewBox="0 0 7 9"><path d="M5.5 .800l-3.7 3.7 3.7 3.7" fill="none" stroke="#5a5a5a" stroke-width="2.4"/></svg>
<svg class="a" style="left:141px;top:407px" width="7" height="9" viewBox="0 0 7 9"><path d="M1.5 .800l3.7 3.7-3.7 3.7" fill="none" stroke="#5a5a5a" stroke-width="2.4"/></svg></div>
<div class="a" style="left:750px;top:85px;width:3px;height:400px;background:#fff"></div>
<div class="a" id="rp" style="left:159px;top:83px;width:589px;height:400px;background:#fff;border-top:2px solid #696969;border-left:2px solid #696969;overflow:hidden"><div class="a" style="left:0;top:0;width:590px;height:27px;background:#99b4d1"></div>
<svg class="a" style="left:9px;top:5px" width="16" height="16" viewBox="0 0 16 16"><path d="M1.5 3.5h7l1-1.5h4.5v2H14.5v9.5h-13z" fill="#f7df8e" stroke="#d9b95a" stroke-width="1"/><path d="M9.2 2.5h4.3v1.5h-5.3z" fill="#fbf3cf"/><rect x="10.5" y="2" width="2.5" height="1.5" fill="#6da3dc"/><path d="M2 5h12v8h-12z" fill="#f6dc8a"/><path d="M2 5h12" stroke="#fdf3c8" stroke-width="1"/></svg>
<div class="t" style="left:35px;top:5px">个性化</div>
<div class="t" style="left:5px;top:32px;font-weight:bold">不显示锁屏</div>
<div class="t" style="left:5px;top:70px;">编辑<span style="color:#800080;text-decoration:underline">策略设置</span></div>
<div class="t" style="left:5px;top:103px;">要求:</div>
<div class="t" style="left:5px;top:120px;"><span class="l">Windows Server 2012</span>、</div>
<div class="t" style="left:5px;top:137px;"><span class="l">Windows 8</span> 或 <span class="l">Windows RT</span> 及以</div>
<div class="t" style="left:5px;top:154px;">上版本</div>
<div class="t" style="left:5px;top:188px;">描述:</div>
<div class="t" style="left:5px;top:205px;">此策略设置控制是否为用户显示锁</div>
<div class="t" style="left:5px;top:222px;">屏界面。</div>
<div class="t" style="left:5px;top:256px;">如果启用此策略设置，则对于不需</div>
<div class="t" style="left:5px;top:273px;">要按 <span class="u">CTRL + ALT + DEL</span>&nbsp; 就能登</div>
<div class="t" style="left:5px;top:290px;">录的用户，其电脑在锁定后会显示</div>
<div class="t" style="left:5px;top:307px;">用户选择的磁贴。</div>
<div class="t" style="left:5px;top:341px;">如果禁用或未配置此策略设置，则</div>
<div class="t" style="left:5px;top:358px;">对于不需要按 <span class="u">CTRL + ALT +</span></div>
<div class="t" style="left:5px;top:375px;"><span class="u">DEL</span> 就能登录的用户，其电脑在锁</div>
<div class="t" style="left:5px;top:392px;">定后会显示锁屏界面。用户必须通</div>
<div class="a" style="left:0;top:398px;width:196px;height:10px;background:#fff"></div>
<div class="a" style="left:195px;top:52px;width:17px;height:346px;background:#f0f0f0"></div>
<div class="a" style="left:196px;top:86px;width:15px;height:246px;background:#cdcdcd"></div>
<svg class="a" style="left:197px;top:69px" width="13" height="9" viewBox="0 0 13 9"><path d="M1 7.5l5.5-5.5 5.5 5.5" fill="none" stroke="#5a5a5a" stroke-width="2.6"/></svg>
<svg class="a" style="left:197px;top:371px" width="13" height="9" viewBox="0 0 13 9"><path d="M1 1.5l5.5 5.5 5.5-5.5" fill="none" stroke="#5a5a5a" stroke-width="2.6"/></svg>
<div class="a" style="left:203px;top:17px;width:400px;height:35px;background:#fff;border-top-left-radius:8px"></div>
<div class="a" style="left:212px;top:52px;width:400px;height:330px;background:#fff"></div>
<div class="t" style="left:218px;top:30px">设置</div>
<div class="a" style="left:561px;top:27px;width:1px;height:24px;background:#e5e5e5"></div>
<svg class="a" style="left:217px;top:54px" width="13" height="15" viewBox="0 0 13 15"><path d="M.5.5h9l3 3v11h-12z" fill="#fff" stroke="#8c8c8c"/><path d="M9.5.500v3h3" fill="#f4f4f4" stroke="#a8a8a8" stroke-width=".8"/><rect x="3" y="4" width="2" height="2" fill="#111"/><rect x="3" y="10" width="2" height="2" fill="#111"/><path d="M3.2 8.8l1.6-1.6" stroke="#666" stroke-width="1"/><path d="M6 5.5h4M6 8.5h4M6 11.5h4" stroke="#77749a" stroke-width="1"/></svg>
<div class="t" style="left:234px;top:53px">强制显示特定的默认锁屏界面图像和登录图像</div>
<svg class="a" style="left:217px;top:75px" width="13" height="15" viewBox="0 0 13 15"><path d="M.5.5h9l3 3v11h-12z" fill="#fff" stroke="#8c8c8c"/><path d="M9.5.500v3h3" fill="#f4f4f4" stroke="#a8a8a8" stroke-width=".8"/><rect x="3" y="4" width="2" height="2" fill="#111"/><rect x="3" y="10" width="2" height="2" fill="#111"/><path d="M3.2 8.8l1.6-1.6" stroke="#666" stroke-width="1"/><path d="M6 5.5h4M6 8.5h4M6 11.5h4" stroke="#77749a" stroke-width="1"/></svg>
<div class="t" style="left:234px;top:74px">阻止更改锁屏界面图像和登录图像</div>
<svg class="a" style="left:217px;top:96px" width="13" height="15" viewBox="0 0 13 15"><path d="M.5.5h9l3 3v11h-12z" fill="#fff" stroke="#8c8c8c"/><path d="M9.5.500v3h3" fill="#f4f4f4" stroke="#a8a8a8" stroke-width=".8"/><rect x="3" y="4" width="2" height="2" fill="#111"/><rect x="3" y="10" width="2" height="2" fill="#111"/><path d="M3.2 8.8l1.6-1.6" stroke="#666" stroke-width="1"/><path d="M6 5.5h4M6 8.5h4M6 11.5h4" stroke="#77749a" stroke-width="1"/></svg>
<div class="t" style="left:234px;top:95px">防止更改<span class="q">“</span>开始<span class="q">”</span>菜单背景</div>
<div class="a" style="left:232px;top:114px;width:357px;height:21px;background:#0078d7;box-sizing:border-box;border:1px dotted #e9a66a"></div>
<svg class="a" style="left:217px;top:117px" width="13" height="15"><defs><pattern id="chk" width="2" height="2" patternUnits="userSpaceOnUse"><rect width="2" height="2" fill="#fff"/><rect width="1" height="1" fill="#0078d7"/><rect x="1" y="1" width="1" height="1" fill="#0078d7"/></pattern></defs><rect width="13" height="15" fill="url(#chk)"/></svg>
<div class="t" style="left:234px;top:116px;color:#fff">不显示锁屏</div>
<svg class="a" style="left:217px;top:138px" width="13" height="15" viewBox="0 0 13 15"><path d="M.5.5h9l3 3v11h-12z" fill="#fff" stroke="#8c8c8c"/><path d="M9.5.500v3h3" fill="#f4f4f4" stroke="#a8a8a8" stroke-width=".8"/><rect x="3" y="4" width="2" height="2" fill="#111"/><rect x="3" y="10" width="2" height="2" fill="#111"/><path d="M3.2 8.8l1.6-1.6" stroke="#666" stroke-width="1"/><path d="M6 5.5h4M6 8.5h4M6 11.5h4" stroke="#77749a" stroke-width="1"/></svg>
<div class="t" style="left:234px;top:137px">阻止启用锁屏界面相机</div>
<svg class="a" style="left:217px;top:159px" width="13" height="15" viewBox="0 0 13 15"><path d="M.5.5h9l3 3v11h-12z" fill="#fff" stroke="#8c8c8c"/><path d="M9.5.500v3h3" fill="#f4f4f4" stroke="#a8a8a8" stroke-width=".8"/><rect x="3" y="4" width="2" height="2" fill="#111"/><rect x="3" y="10" width="2" height="2" fill="#111"/><path d="M3.2 8.8l1.6-1.6" stroke="#666" stroke-width="1"/><path d="M6 5.5h4M6 8.5h4M6 11.5h4" stroke="#77749a" stroke-width="1"/></svg>
<div class="t" style="left:234px;top:158px">阻止启用锁屏界面幻灯片</div>
<svg class="a" style="left:217px;top:180px" width="13" height="15" viewBox="0 0 13 15"><path d="M.5.5h9l3 3v11h-12z" fill="#fff" stroke="#8c8c8c"/><path d="M9.5.500v3h3" fill="#f4f4f4" stroke="#a8a8a8" stroke-width=".8"/><rect x="3" y="4" width="2" height="2" fill="#111"/><rect x="3" y="10" width="2" height="2" fill="#111"/><path d="M3.2 8.8l1.6-1.6" stroke="#666" stroke-width="1"/><path d="M6 5.5h4M6 8.5h4M6 11.5h4" stroke="#77749a" stroke-width="1"/></svg>
<div class="t" style="left:234px;top:179px">强制特定背景和主题色</div>
<svg class="a" style="left:217px;top:201px" width="13" height="15" viewBox="0 0 13 15"><path d="M.5.5h9l3 3v11h-12z" fill="#fff" stroke="#8c8c8c"/><path d="M9.5.500v3h3" fill="#f4f4f4" stroke="#a8a8a8" stroke-width=".8"/><rect x="3" y="4" width="2" height="2" fill="#111"/><rect x="3" y="10" width="2" height="2" fill="#111"/><path d="M3.2 8.8l1.6-1.6" stroke="#666" stroke-width="1"/><path d="M6 5.5h4M6 8.5h4M6 11.5h4" stroke="#77749a" stroke-width="1"/></svg>
<div class="t" style="left:234px;top:200px">强制特定<span class="q">“</span>开始<span class="q">”</span>屏幕背景</div>
<div class="a" style="left:212px;top:382px;width:400px;height:16px;background:#f0f0f0"></div>
<div class="a" style="left:229px;top:382px;width:198px;height:15px;background:#cdcdcd"></div>
<svg class="a" style="left:217px;top:385px" width="7" height="9" viewBox="0 0 7 9"><path d="M5.5 .800l-3.7 3.7 3.7 3.7" fill="none" stroke="#5a5a5a" stroke-width="2.4"/></svg>
<svg class="a" style="left:577px;top:385px" width="7" height="9" viewBox="0 0 7 9"><path d="M1.5 .800l3.7 3.7-3.7 3.7" fill="none" stroke="#5a5a5a" stroke-width="2.4"/></svg>
<div class="a" style="left:0;top:398px;width:590px;height:4px;background:#f0f0f0"></div></div>
<div class="a" style="left:159px;top:83px;width:592px;height:1px;background:#a0a0a0"></div>
<div class="a" style="left:159px;top:83px;width:1px;height:402px;background:#a0a0a0"></div>
<div class="a" style="left:159px;top:485px;width:593px;height:1px;background:#696969"></div>
<svg class="a" style="left:159px;top:485px" width="90" height="22" viewBox="0 0 90 22"><path d="M.5 0l8 19.5h27.5l6.5-19.5" fill="#fff" stroke="#404040" stroke-width="1"/><path d="M39.5 8l4.5 11.5h27.5l7-19.5h-36.5" fill="#f0f0f0" stroke="none"/><path d="M39.5 8l4.5 11.5h27.5l7-19.5" fill="none" stroke="#404040" stroke-width="1"/></svg>
<div class="t" style="left:169px;top:487px;">扩展</div>
<div class="t" style="left:205px;top:487px;">标准</div>
<div class="a" style="left:0;top:506px;width:752px;height:1px;background:#d7d7d7"></div>
<div class="t" style="left:2px;top:510px;">8 个设置</div>
<div class="a" style="left:531px;top:508px;width:1px;height:20px;background:#d7d7d7"></div>
<div class="a" style="left:664px;top:508px;width:1px;height:20px;background:#d7d7d7"></div>
<div class="a" style="left:750px;top:508px;width:1px;height:20px;background:#d7d7d7"></div>
</div>

<div id="tb" class="a">
 <div class="a" style="left:0;top:0;width:49px;height:40px;background:#22353f"></div>
<svg class="a" style="left:17px;top:12px" width="16" height="16" viewBox="0 0 16 16"><path d="M0 2.3l6.5-.9v6.2h-6.5zM7.3 1.3l8.7-1.3v7.6h-8.7zM0 8.4h6.5v6.2l-6.5-.9zM7.3 8.4h8.7v7.6l-8.7-1.3z" fill="#fff"/></svg>
<div id="search" class="a"></div>
<svg class="a" style="left:60px;top:11px" width="18" height="18" viewBox="0 0 18 18"><circle cx="11" cy="6.5" r="5" fill="none" stroke="#222" stroke-width="1.3"/><path d="M7.5 10l-6.5 6.5" stroke="#222" stroke-width="1.4"/></svg>
<div class="t" style="left:89px;top:11px;font-size:14px;line-height:20px;height:20px;color:#2b2b2b">在这里输入你要搜索的内容</div>
<div class="a" style="left:385px;top:12px;width:11px;height:11px;border:2px solid #fff;border-radius:50%"></div>
<svg class="a" style="left:432px;top:12px" width="18" height="15" viewBox="0 0 18 15"><path d="M.5 1h12M.5 13.5h12M1.5 1v3M11.5 1v3M1.5 11v2.5M11.5 11v2.5M16 1v13" stroke="#fff" stroke-width="1.1" fill="none"/><rect x="1.5" y="4.5" width="10" height="6" fill="none" stroke="#fff" stroke-width="1.1"/><rect x="14.5" y="3" width="3" height="3" fill="#fff"/></svg>
<svg class="a" style="left:482px;top:9px" width="21" height="22" viewBox="0 0 36 38"><path d="M2 19C3 9 9 2 19 2c9 0 14 6 14 15v4H12c.5 5 4 8 10 8 4 0 7-1 9-2.5v7c-3 1.5-6 2.5-11 2.5-9 0-15-5-15-14 0-6 3-10 8-13C7 10.5 4 14 2 19zm10-3h12c0-4-2-6.5-5.5-6.5S12.5 12 12 16z" fill="#0b7add"/></svg>
<svg class="a" style="left:529px;top:10px" width="24" height="20" viewBox="0 0 24 20"><path d="M.7 2c0-.7.5-1.3 1.3-1.3h6.5l1.8 1.8h11.5c.7 0 1.2.5 1.2 1.2v10.8h-22.3z" fill="#e8a91c"/><path d="M.7 4.8h22.3v9c0 .6-.5 1-1 1h-20.3c-.6 0-1-.4-1-1z" fill="#ffd863"/><path d="M5.5 10.5h13v8.5h-4.2v-4h-4.6v4h-4.2z" fill="#3d9de6"/><path d="M5.5 10.5h13v1.5h-13z" fill="#2f86d0"/></svg>
<svg class="a" style="left:577px;top:7px" width="25" height="25" viewBox="0 0 25 25"><path d="M8.5 7V5.5a4 4 0 0 1 8 0V7" fill="none" stroke="#fff" stroke-width="1.3"/><path d="M1 7h23v15c0 1-.8 2-2 2h-19c-1.2 0-2-1-2-2z" fill="#fff"/><rect x="7.5" y="10.5" width="4.5" height="4.5" fill="#f25022"/><rect x="13" y="10.5" width="4.5" height="4.5" fill="#7fba00"/><rect x="7.5" y="16" width="4.5" height="4.5" fill="#00a4ef"/><rect x="13" y="16" width="4.5" height="4.5" fill="#ffb900"/></svg>
<svg class="a" style="left:626px;top:9px" width="26" height="21" viewBox="0 0 26 21"><path d="M.8 7.8L13 1l12.2 6.8v12.4H.8z" fill="#fff"/><path d="M1.5 8.3L25 7.8l-5.8 8.7-5.7-5.3 3.3-.9z" fill="#1f2d3a"/><path d="M1.5 8.3l15.3 2-3.3.9z" fill="#1f2d3a"/></svg>
<div class="a" style="left:663px;top:0;width:49px;height:40px;background:#3b4854"></div>
<div class="a" style="left:663px;top:38px;width:49px;height:2px;background:#76b9ed"></div>
<svg class="a" style="left:677px;top:9px" width="23" height="22" viewBox="0 0 23 22"><path d="M6 1h14.5c2 0 2 3 0 3h-1.5v14c0 2-1.5 3-3 3h-13c-2.5 0-2.5-3.5 0-3.5h2v-14c0-1.3.500-2.5 1-2.5z" fill="#fffbe4" stroke="#e3d49a" stroke-width=".8"/><path d="M3 17.5h12" stroke="#e3d49a"/><path d="M8 5.5h8M8 7.5h8M8 9.5h8M8 11.5h8M8 13.5h8M8 15.5h8" stroke="#a9a9b5" stroke-width=".9"/></svg>
<svg class="a" style="left:775px;top:16px" width="12" height="8" viewBox="0 0 12 8"><path d="M1 7l5-5.5 5 5.5" fill="none" stroke="#fff" stroke-width="1.3"/></svg>
<svg class="a" style="left:796px;top:12px" width="18" height="16" viewBox="0 0 18 16"><rect x="4.5" y="2.5" width="12" height="9" fill="none" stroke="#fff" stroke-width="1.1"/><path d="M9 11.5v3M2.5 14.5h10.5M3 6.5v8" stroke="#fff" stroke-width="1.1" fill="none"/><rect x="1" y="2.5" width="4.5" height="4" fill="#1b2743" stroke="#fff" stroke-width="1"/></svg>
<svg class="a" style="left:820px;top:12px" width="19" height="16" viewBox="0 0 19 16"><path d="M1.5 5.8h2.3l3-3.3v10.5l-3-3.3h-2.3z" fill="none" stroke="#fff" stroke-width="1"/><path d="M9 5.8c.9 1.2.9 2.7 0 3.9M11.2 3.8c2 2.4 2 5.5 0 7.9M13.4 1.8c3 3.6 3 8.3 0 11.9" fill="none" stroke="#fff" stroke-width="1"/></svg>
<div class="t" style="left:844px;top:9px;font-size:15px;line-height:20px;height:20px;color:#fff;font-weight:500">中</div>
<div class="a" style="left:874px;top:13px;width:15px;height:14px;background:#fff"></div><div class="t" style="left:875px;top:11px;font-size:12px;line-height:16px;color:#000">拼</div>
<div class="t" style="left:896px;top:2px;width:80px;text-align:center;color:#fff;font-size:12px;letter-spacing:.4px">17:26</div>
<div class="t" style="left:895px;top:21px;width:80px;text-align:center;color:#fff;font-size:12px;letter-spacing:.65px">2019/12/30</div>
<svg class="a" style="left:984px;top:12px" width="17" height="17" viewBox="0 0 17 17"><path d="M1 1h15v11h-6l-3 3.5v-3.5h-6z" fill="none" stroke="#fff" stroke-width="1.2"/></svg>
<div class="a" style="left:1020px;top:0;width:1px;height:40px;background:#7d8794"></div>
</div>
</body>
</html>
